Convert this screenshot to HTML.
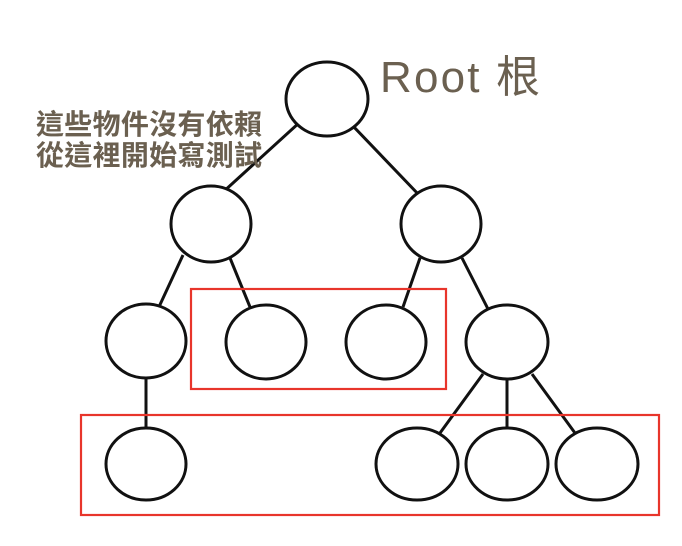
<!DOCTYPE html>
<html><head><meta charset="utf-8"><style>
html,body{margin:0;padding:0;background:#fff;width:682px;height:546px;overflow:hidden}
</style></head><body>
<svg width="682" height="546" xmlns="http://www.w3.org/2000/svg">
<g stroke="#111" stroke-width="3" fill="none">
<line x1="300" y1="122" x2="222" y2="193"/>
<line x1="352" y1="125" x2="420" y2="196"/>
<line x1="183" y1="255" x2="158" y2="309"/>
<line x1="230" y1="258" x2="250" y2="307"/>
<line x1="420" y1="258" x2="403" y2="307"/>
<line x1="462" y1="258" x2="488" y2="309"/>
<line x1="146" y1="378" x2="146" y2="428"/>
<line x1="483" y1="374" x2="440" y2="433"/>
<line x1="507" y1="379" x2="507" y2="428"/>
<line x1="532" y1="374" x2="575" y2="433"/>
</g>
<g stroke="#111" stroke-width="3" fill="#fff">
<ellipse cx="327" cy="99" rx="41" ry="37"/>
<ellipse cx="211" cy="224" rx="40" ry="38"/>
<ellipse cx="441" cy="224" rx="40" ry="38"/>
<ellipse cx="146" cy="341" rx="40" ry="37"/>
<ellipse cx="266" cy="342" rx="40" ry="37"/>
<ellipse cx="386" cy="342" rx="40" ry="37"/>
<ellipse cx="507" cy="342" rx="41" ry="37"/>
<ellipse cx="146" cy="464" rx="40" ry="36"/>
<ellipse cx="417" cy="464" rx="41" ry="36"/>
<ellipse cx="507" cy="464" rx="41" ry="36"/>
<ellipse cx="597" cy="464" rx="41" ry="36"/>
</g>
<g stroke="#e8352b" stroke-width="2.2" fill="none">
<rect x="191" y="289" width="255" height="100"/>
<rect x="81" y="415" width="578" height="100"/>
</g>
<text x="380" y="92" font-family="Liberation Sans, Noto Sans CJK TC, sans-serif" font-size="44" fill="#6b6050" textLength="160">Root 根</text>
<text x="36" y="134" font-family="Liberation Sans, Noto Sans CJK TC, sans-serif" font-size="28" font-weight="bold" fill="#6b6050" textLength="226">這些物件沒有依賴</text>
<text x="36" y="165" font-family="Liberation Sans, Noto Sans CJK TC, sans-serif" font-size="28" font-weight="bold" fill="#6b6050" textLength="226">從這裡開始寫測試</text>
</svg>
</body></html>
